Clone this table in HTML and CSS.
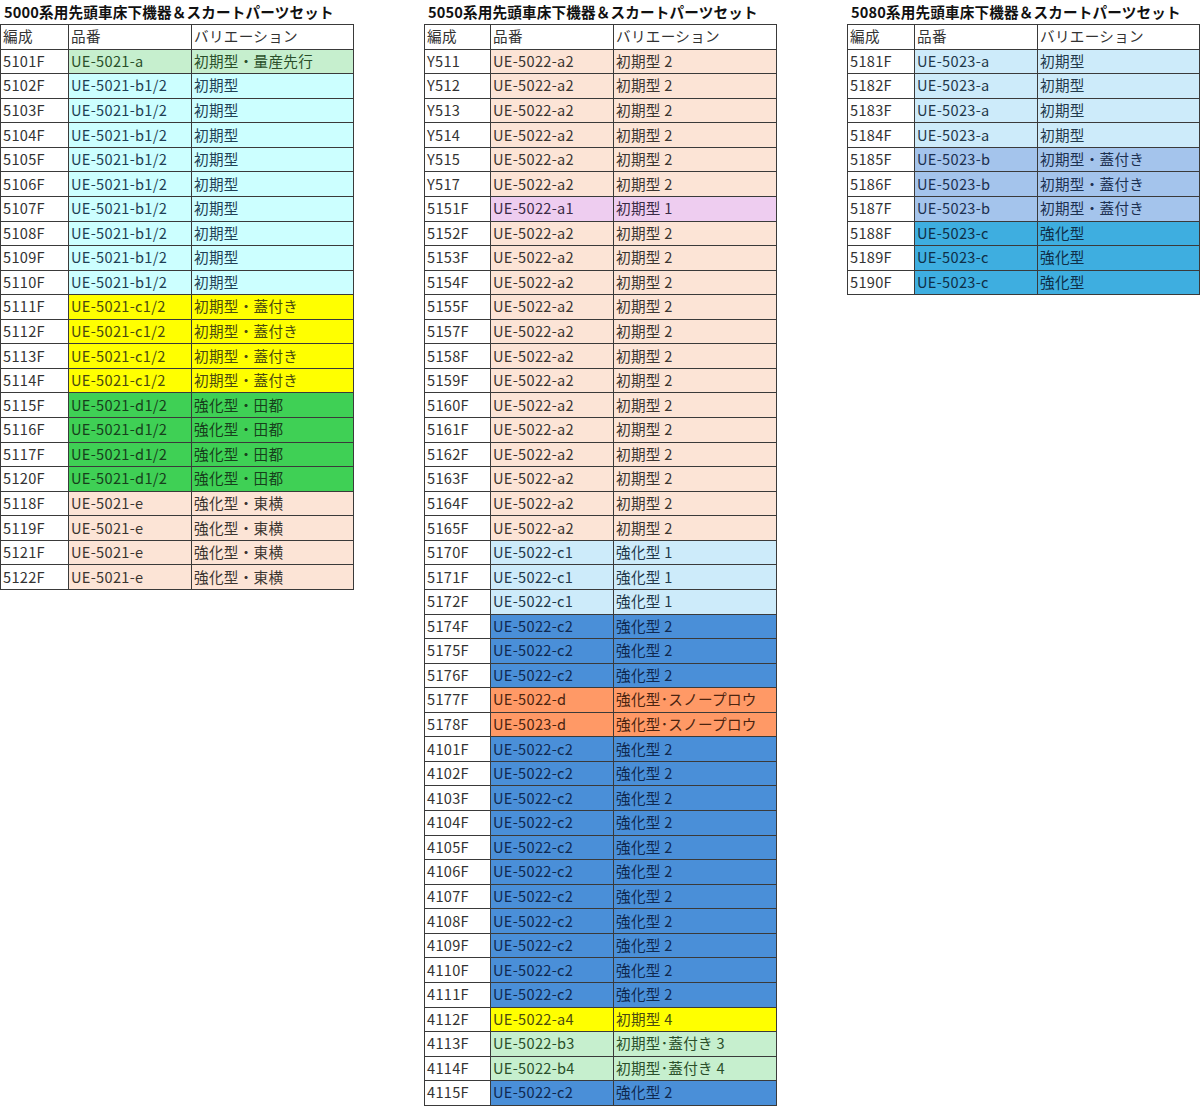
FILE: index.html
```html
<!DOCTYPE html>
<html lang="ja">
<head>
<meta charset="utf-8">
<title>先頭車床下機器＆スカートパーツセット</title>
<link rel="stylesheet" href="styles.css">
</head>
<body>
<div class="page">

<section class="block block-a">
<h2 class="title">5000系用先頭車床下機器＆スカートパーツセット</h2>
<table class="sheet">
<colgroup><col class="c1"><col class="c2"><col class="c3"></colgroup>
<tr><td>編成</td><td>品番</td><td>バリエーション</td></tr>
<tr><td>5101F</td><td class="lgreen">UE-5021-a</td><td class="lgreen">初期型・量産先行</td></tr>
<tr><td>5102F</td><td class="cyan">UE-5021-b1/2</td><td class="cyan">初期型</td></tr>
<tr><td>5103F</td><td class="cyan">UE-5021-b1/2</td><td class="cyan">初期型</td></tr>
<tr><td>5104F</td><td class="cyan">UE-5021-b1/2</td><td class="cyan">初期型</td></tr>
<tr><td>5105F</td><td class="cyan">UE-5021-b1/2</td><td class="cyan">初期型</td></tr>
<tr><td>5106F</td><td class="cyan">UE-5021-b1/2</td><td class="cyan">初期型</td></tr>
<tr><td>5107F</td><td class="cyan">UE-5021-b1/2</td><td class="cyan">初期型</td></tr>
<tr><td>5108F</td><td class="cyan">UE-5021-b1/2</td><td class="cyan">初期型</td></tr>
<tr><td>5109F</td><td class="cyan">UE-5021-b1/2</td><td class="cyan">初期型</td></tr>
<tr><td>5110F</td><td class="cyan">UE-5021-b1/2</td><td class="cyan">初期型</td></tr>
<tr><td>5111F</td><td class="yellow">UE-5021-c1/2</td><td class="yellow">初期型・蓋付き</td></tr>
<tr><td>5112F</td><td class="yellow">UE-5021-c1/2</td><td class="yellow">初期型・蓋付き</td></tr>
<tr><td>5113F</td><td class="yellow">UE-5021-c1/2</td><td class="yellow">初期型・蓋付き</td></tr>
<tr><td>5114F</td><td class="yellow">UE-5021-c1/2</td><td class="yellow">初期型・蓋付き</td></tr>
<tr><td>5115F</td><td class="green">UE-5021-d1/2</td><td class="green">強化型・田都</td></tr>
<tr><td>5116F</td><td class="green">UE-5021-d1/2</td><td class="green">強化型・田都</td></tr>
<tr><td>5117F</td><td class="green">UE-5021-d1/2</td><td class="green">強化型・田都</td></tr>
<tr><td>5120F</td><td class="green">UE-5021-d1/2</td><td class="green">強化型・田都</td></tr>
<tr><td>5118F</td><td class="peach">UE-5021-e</td><td class="peach">強化型・東横</td></tr>
<tr><td>5119F</td><td class="peach">UE-5021-e</td><td class="peach">強化型・東横</td></tr>
<tr><td>5121F</td><td class="peach">UE-5021-e</td><td class="peach">強化型・東横</td></tr>
<tr><td>5122F</td><td class="peach">UE-5021-e</td><td class="peach">強化型・東横</td></tr>
</table>
</section>

<section class="block block-b">
<h2 class="title">5050系用先頭車床下機器＆スカートパーツセット</h2>
<table class="sheet">
<colgroup><col class="m1"><col class="c2"><col class="m3"></colgroup>
<tr><td>編成</td><td>品番</td><td>バリエーション</td></tr>
<tr><td>Y511</td><td class="peach">UE-5022-a2</td><td class="peach">初期型 2</td></tr>
<tr><td>Y512</td><td class="peach">UE-5022-a2</td><td class="peach">初期型 2</td></tr>
<tr><td>Y513</td><td class="peach">UE-5022-a2</td><td class="peach">初期型 2</td></tr>
<tr><td>Y514</td><td class="peach">UE-5022-a2</td><td class="peach">初期型 2</td></tr>
<tr><td>Y515</td><td class="peach">UE-5022-a2</td><td class="peach">初期型 2</td></tr>
<tr><td>Y517</td><td class="peach">UE-5022-a2</td><td class="peach">初期型 2</td></tr>
<tr><td>5151F</td><td class="lilac">UE-5022-a1</td><td class="lilac">初期型 1</td></tr>
<tr><td>5152F</td><td class="peach">UE-5022-a2</td><td class="peach">初期型 2</td></tr>
<tr><td>5153F</td><td class="peach">UE-5022-a2</td><td class="peach">初期型 2</td></tr>
<tr><td>5154F</td><td class="peach">UE-5022-a2</td><td class="peach">初期型 2</td></tr>
<tr><td>5155F</td><td class="peach">UE-5022-a2</td><td class="peach">初期型 2</td></tr>
<tr><td>5157F</td><td class="peach">UE-5022-a2</td><td class="peach">初期型 2</td></tr>
<tr><td>5158F</td><td class="peach">UE-5022-a2</td><td class="peach">初期型 2</td></tr>
<tr><td>5159F</td><td class="peach">UE-5022-a2</td><td class="peach">初期型 2</td></tr>
<tr><td>5160F</td><td class="peach">UE-5022-a2</td><td class="peach">初期型 2</td></tr>
<tr><td>5161F</td><td class="peach">UE-5022-a2</td><td class="peach">初期型 2</td></tr>
<tr><td>5162F</td><td class="peach">UE-5022-a2</td><td class="peach">初期型 2</td></tr>
<tr><td>5163F</td><td class="peach">UE-5022-a2</td><td class="peach">初期型 2</td></tr>
<tr><td>5164F</td><td class="peach">UE-5022-a2</td><td class="peach">初期型 2</td></tr>
<tr><td>5165F</td><td class="peach">UE-5022-a2</td><td class="peach">初期型 2</td></tr>
<tr><td>5170F</td><td class="sky">UE-5022-c1</td><td class="sky">強化型 1</td></tr>
<tr><td>5171F</td><td class="sky">UE-5022-c1</td><td class="sky">強化型 1</td></tr>
<tr><td>5172F</td><td class="sky">UE-5022-c1</td><td class="sky">強化型 1</td></tr>
<tr><td>5174F</td><td class="blue">UE-5022-c2</td><td class="blue">強化型 2</td></tr>
<tr><td>5175F</td><td class="blue">UE-5022-c2</td><td class="blue">強化型 2</td></tr>
<tr><td>5176F</td><td class="blue">UE-5022-c2</td><td class="blue">強化型 2</td></tr>
<tr><td>5177F</td><td class="orange">UE-5022-d</td><td class="orange">強化型･スノープロウ</td></tr>
<tr><td>5178F</td><td class="orange">UE-5023-d</td><td class="orange">強化型･スノープロウ</td></tr>
<tr><td>4101F</td><td class="blue">UE-5022-c2</td><td class="blue">強化型 2</td></tr>
<tr><td>4102F</td><td class="blue">UE-5022-c2</td><td class="blue">強化型 2</td></tr>
<tr><td>4103F</td><td class="blue">UE-5022-c2</td><td class="blue">強化型 2</td></tr>
<tr><td>4104F</td><td class="blue">UE-5022-c2</td><td class="blue">強化型 2</td></tr>
<tr><td>4105F</td><td class="blue">UE-5022-c2</td><td class="blue">強化型 2</td></tr>
<tr><td>4106F</td><td class="blue">UE-5022-c2</td><td class="blue">強化型 2</td></tr>
<tr><td>4107F</td><td class="blue">UE-5022-c2</td><td class="blue">強化型 2</td></tr>
<tr><td>4108F</td><td class="blue">UE-5022-c2</td><td class="blue">強化型 2</td></tr>
<tr><td>4109F</td><td class="blue">UE-5022-c2</td><td class="blue">強化型 2</td></tr>
<tr><td>4110F</td><td class="blue">UE-5022-c2</td><td class="blue">強化型 2</td></tr>
<tr><td>4111F</td><td class="blue">UE-5022-c2</td><td class="blue">強化型 2</td></tr>
<tr><td>4112F</td><td class="yellow">UE-5022-a4</td><td class="yellow">初期型 4</td></tr>
<tr><td>4113F</td><td class="lgreen">UE-5022-b3</td><td class="lgreen">初期型･蓋付き 3</td></tr>
<tr><td>4114F</td><td class="lgreen">UE-5022-b4</td><td class="lgreen">初期型･蓋付き 4</td></tr>
<tr><td>4115F</td><td class="blue">UE-5022-c2</td><td class="blue">強化型 2</td></tr>
</table>
</section>

<section class="block block-c">
<h2 class="title">5080系用先頭車床下機器＆スカートパーツセット</h2>
<table class="sheet">
<colgroup><col class="r1"><col class="c2"><col class="c3"></colgroup>
<tr><td>編成</td><td>品番</td><td>バリエーション</td></tr>
<tr><td>5181F</td><td class="sky">UE-5023-a</td><td class="sky">初期型</td></tr>
<tr><td>5182F</td><td class="sky">UE-5023-a</td><td class="sky">初期型</td></tr>
<tr><td>5183F</td><td class="sky">UE-5023-a</td><td class="sky">初期型</td></tr>
<tr><td>5184F</td><td class="sky">UE-5023-a</td><td class="sky">初期型</td></tr>
<tr><td>5185F</td><td class="steel">UE-5023-b</td><td class="steel">初期型・蓋付き</td></tr>
<tr><td>5186F</td><td class="steel">UE-5023-b</td><td class="steel">初期型・蓋付き</td></tr>
<tr><td>5187F</td><td class="steel">UE-5023-b</td><td class="steel">初期型・蓋付き</td></tr>
<tr><td>5188F</td><td class="azure">UE-5023-c</td><td class="azure">強化型</td></tr>
<tr><td>5189F</td><td class="azure">UE-5023-c</td><td class="azure">強化型</td></tr>
<tr><td>5190F</td><td class="azure">UE-5023-c</td><td class="azure">強化型</td></tr>
</table>
</section>

</div>
</body>
</html>
```

FILE: styles.css
```css
html, body {
  margin: 0;
  padding: 0;
  background: #ffffff;
}

body {
  font-family: "Noto Sans CJK JP", "Noto Sans", sans-serif;
  color: #333333;
}

.page {
  display: flex;
  align-items: flex-start;
  gap: 70px;
  width: 1200px;
}

.block {
  display: flex;
  flex-direction: column;
}

.title {
  margin: 0;
  height: 24px;
  line-height: 24px;
  padding-left: 4px;
  font-size: 14.6px;
  font-weight: bold;
  letter-spacing: 0.15px;
  color: #111111;
  white-space: nowrap;
}

.sheet {
  border-collapse: collapse;
  table-layout: fixed;
  font-size: 14.6px;
  letter-spacing: 0.3px;
}

.block-a .sheet { width: 354px; }
.block-b .sheet { width: 353px; }
.block-c .sheet { width: 353px; }

.c1 { width: 68px; }
.c2 { width: 123px; }
.c3 { width: 162px; }
.m1 { width: 66px; }
.m3 { width: 163px; }
.r1 { width: 67px; }

.sheet tr {
  height: 24.57px;
}

.sheet td {
  border: 1px solid #3a3a3a;
  padding: 0 0 1px 2px;
  line-height: 20px;
  white-space: nowrap;
  overflow: hidden;
  vertical-align: middle;
  background: #ffffff;
}

.sheet td.lgreen { background: #c6efce; color: #2a4f2a; }
.sheet td.cyan { background: #ccffff; color: #1f3f55; }
.sheet td.yellow { background: #ffff00; color: #4a4a10; }
.sheet td.green { background: #3fd055; color: #17401c; }
.sheet td.peach { background: #fce4d6; color: #3a3430; }
.sheet td.lilac { background: #eecdf0; color: #3a2a45; }
.sheet td.sky { background: #cdebfa; color: #22384a; }
.sheet td.blue { background: #4a8fd8; color: #0f2950; }
.sheet td.orange { background: #ff9966; color: #4a2410; }
.sheet td.steel { background: #a4c4ec; color: #1c3050; }
.sheet td.azure { background: #3eaee0; color: #0f2f48; }
```
